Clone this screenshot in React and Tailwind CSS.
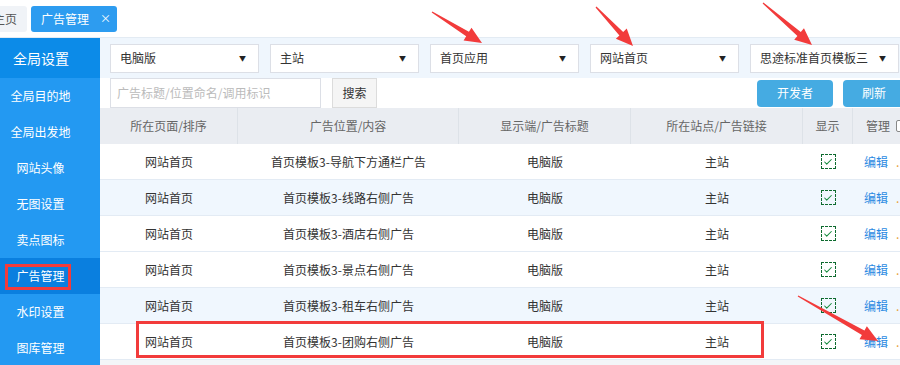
import { Check } from "lucide-react";

const menu = ["全局目的地", "全局出发地", "网站头像", "无图设置", "卖点图标", "广告管理", "水印设置", "图库管理"];

const selects = ["电脑版", "主站", "首页应用", "网站首页", "思途标准首页模板三"];

const rows = [
  { pos: "首页模板3-导航下方通栏广告", bg: "bg-white" },
  { pos: "首页模板3-线路右侧广告", bg: "bg-[#f0f7fe]" },
  { pos: "首页模板3-酒店右侧广告", bg: "bg-white" },
  { pos: "首页模板3-景点右侧广告", bg: "bg-white" },
  { pos: "首页模板3-租车右侧广告", bg: "bg-[#f0f7fe]" },
  { pos: "首页模板3-团购右侧广告", bg: "bg-white" },
];

// tapered annotation arrow, tail -> tip
const arrowPoints = (x1, y1, x2, y2) => {
  const dx = x2 - x1;
  const dy = y2 - y1;
  const len = Math.hypot(dx, dy);
  const ux = dx / len;
  const uy = dy / len;
  const nx = -uy;
  const ny = ux;
  const hx = x2 - ux * 17;
  const hy = y2 - uy * 17;
  const p = [
    [x1 + nx * 0.6, y1 + ny * 0.6],
    [hx + nx * 2.6, hy + ny * 2.6],
    [hx + nx * 7.5, hy + ny * 7.5],
    [x2, y2],
    [hx - nx * 7.5, hy - ny * 7.5],
    [hx - nx * 2.6, hy - ny * 2.6],
    [x1 - nx * 0.6, y1 - ny * 0.6],
  ];
  return p.map((q) => q.join(",")).join(" ");
};

const App = () => {
  return (
    <div
      className="relative w-[900px] h-[365px] overflow-hidden bg-white text-[12px] text-[#333]"
      style={{ fontFamily: '"Noto Sans CJK SC", "Noto Sans", sans-serif' }}
    >
      {/* Tabs */}
      <div className="h-[38px] flex items-center gap-[4px] border-b border-[#e3ebf3] bg-white">
        <div className="ml-[-17px] h-[26px] px-[10px] flex items-center rounded-[3px] bg-[#f0f3f7] text-[#555]">主页</div>
        <div className="h-[26px] pl-[10px] pr-[6px] flex items-center gap-[11px] rounded-[3px] bg-[#2d9cf0] text-white">
          <span>广告管理</span>
          <span className="text-[11px] leading-none">×</span>
        </div>
      </div>

      <div className="flex">
        {/* Sidebar */}
        <div className="w-[100px] shrink-0 bg-[#2399f2] text-white">
          <div className="h-[40px] bg-[#0c8be8] flex items-center">
            <span className="w-[82px] text-center text-[14px]">全局设置</span>
          </div>
          {menu.map((m) => (
            <div key={m} className={`h-[36px] flex items-center ${m === "广告管理" ? "bg-[#0a7fdf]" : ""}`}>
              <span className="w-[81px] text-center">{m}</span>
            </div>
          ))}
        </div>

        {/* Main */}
        <div className="flex-1 min-w-0">
          <div className="h-[40px] bg-[#eff6fd] flex items-center gap-[11px] pl-[10px]">
            {selects.map((s) => (
              <div key={s} className="w-[149px] h-[29px] shrink-0 bg-white border border-[#dcdfe6] flex items-center justify-between pl-[9px] pr-[12px]">
                <span>{s}</span>
                <span className="text-[7px] text-[#222]">▼</span>
              </div>
            ))}
          </div>

          <div className="h-[30px] flex items-center pl-[10px]">
            <div className="w-[211px] h-[30px] border border-[#dcdfe6] flex items-center pl-[6px] text-[#bbb]">
              广告标题/位置命名/调用标识
            </div>
            <div className="ml-[11px] w-[45px] h-[30px] border border-[#dcdcdc] bg-[#f5f5f5] flex items-center justify-center">搜索</div>
            <div className="ml-auto flex gap-[10px] -mr-[5px]">
              <div className="w-[76px] h-[27px] rounded-[4px] bg-[#45abe2] text-white flex items-center justify-center">开发者</div>
              <div className="w-[62px] h-[27px] rounded-[4px] bg-[#45abe2] text-white flex items-center justify-center">刷新</div>
            </div>
          </div>

          {/* Table */}
          <div className="h-[36px] flex bg-[#eaedf2] text-[#666]">
            <div className="w-[138px] shrink-0 border-r border-[#dde2e8] flex items-center justify-center">所在页面/排序</div>
            <div className="w-[221px] shrink-0 border-r border-[#dde2e8] flex items-center justify-center">广告位置/内容</div>
            <div className="w-[172px] shrink-0 border-r border-[#dde2e8] flex items-center justify-center">显示端/广告标题</div>
            <div className="w-[172px] shrink-0 border-r border-[#dde2e8] flex items-center justify-center">所在站点/广告链接</div>
            <div className="w-[50px] shrink-0 border-r border-[#dde2e8] flex items-center justify-center">显示</div>
            <div className="w-[80px] shrink-0 flex items-center pl-[13px] gap-[6px]">
              <span>管理</span>
              <span className="w-[12px] h-[12px] border border-[#888] rounded-[2px] bg-white"></span>
            </div>
          </div>

          {rows.map((r, i) => (
            <div key={i} className={`h-[36px] flex border-b border-[#e3ebf4] ${r.bg}`}>
              <div className="w-[138px] shrink-0 flex items-center justify-center">网站首页</div>
              <div className="w-[221px] shrink-0 flex items-center justify-center">{r.pos}</div>
              <div className="w-[172px] shrink-0 flex items-center justify-center">电脑版</div>
              <div className="w-[172px] shrink-0 flex items-center justify-center">主站</div>
              <div className="w-[50px] shrink-0 flex items-center justify-center">
                <span className="w-[15px] h-[15px] border border-dashed border-[#0d6a2e] flex items-center justify-center">
                  <Check size={10} strokeWidth={2.5} className="text-[#138a3c]" />
                </span>
              </div>
              <div className="w-[80px] shrink-0 flex items-center pl-[11px]">
                <span className="text-[#2b8ae2]">编辑</span>
                <span className="ml-[8px] text-[#e8a33a]">.</span>
              </div>
            </div>
          ))}
          <div className="h-[10px] bg-[#f3f5f8]"></div>
        </div>
      </div>

      {/* Annotations */}
      <div className="absolute left-[5px] top-[264px] w-[66px] h-[26px] border-[3px] border-[#f23b3b] pointer-events-none"></div>
      <div className="absolute left-[136px] top-[321px] w-[628px] h-[37px] border-[3px] border-[#f23b3b] pointer-events-none"></div>
      <svg className="absolute inset-0 pointer-events-none" width="900" height="365">
        <polygon points={arrowPoints(432, 12, 482, 43)} fill="#f23b3b" />
        <polygon points={arrowPoints(596, 7, 633, 46)} fill="#f23b3b" />
        <polygon points={arrowPoints(763, 3, 812, 45)} fill="#f23b3b" />
        <polygon points={arrowPoints(798, 296, 878, 341)} fill="#f23b3b" />
      </svg>
    </div>
  );
};

export default App;
